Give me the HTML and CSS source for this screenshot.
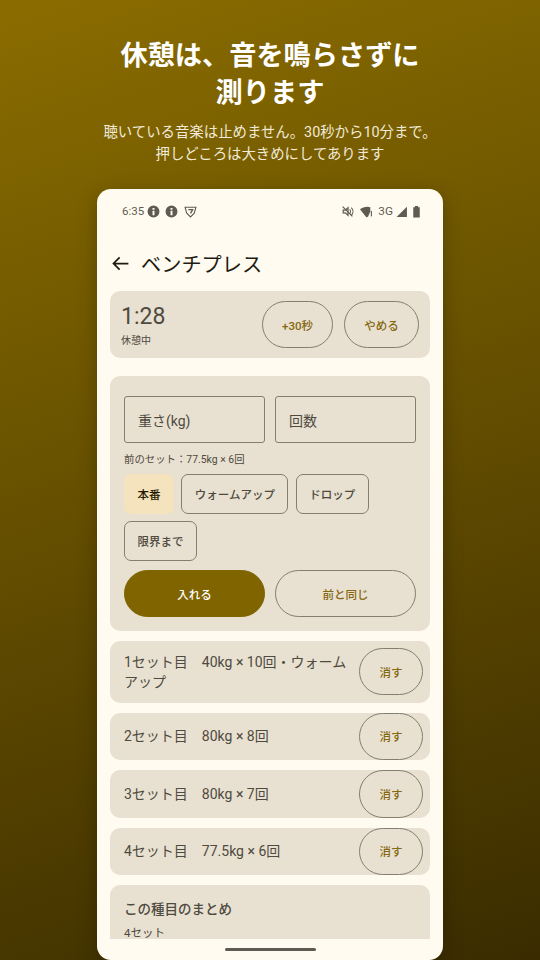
FILE: index.html
```html
<!DOCTYPE html>
<html lang="ja">
<head>
<meta charset="utf-8">
<title>ベンチプレス</title>
<link rel="stylesheet" href="styles.css">
</head>
<body>
<main class="stage">
  <h1 class="headline">休憩は、音を鳴らさずに<br>測ります</h1>
  <p class="lede">聴いている音楽は止めません。30秒から10分まで。<br>押しどころは大きめにしてあります</p>
  <section class="phone">
    <div class="status">
      <div class="status-side">
        <span class="clock">6:35</span>
        <svg class="sicon info-a" viewBox="0 0 24 24"><path fill="#5f5b52" fill-rule="evenodd" d="M12 1a11 11 0 1 0 0 22 11 11 0 0 0 0-22zm-1.8 4.4h3.6v3.4h-3.6zm0 5h3.6v8.4h-3.6z"/></svg>
        <svg class="sicon info-b" viewBox="0 0 24 24"><path fill="#5f5b52" fill-rule="evenodd" d="M12 1a11 11 0 1 0 0 22 11 11 0 0 0 0-22zm-1.8 4.4h3.6v3.4h-3.6zm0 5h3.6v8.4h-3.6z"/></svg>
        <svg class="sicon vpn" viewBox="0 0 24 24"><path fill="none" stroke="#5f5b52" stroke-width="2" d="M2 4h20l-3 11-7 7-7-7z"/><path fill="none" stroke="#5f5b52" stroke-width="2.4" d="M8 8.500h8l-4 7"/></svg>
      </div>
      <div class="status-side">
        <svg class="sicon mute" viewBox="0 0 24 24"><path fill="none" stroke="#5f5b52" stroke-width="2.2" d="M3 3l18 18"/><path fill="none" stroke="#5f5b52" stroke-width="2.2" d="M4 9.500h4l5-4.500v14l-5-4.500H4z"/><path fill="none" stroke="#5f5b52" stroke-width="2" d="M16 8c2 2 2 6 0 8M19 5c4 4 4 10 0 14"/></svg>
        <svg class="sicon wifi" viewBox="0 0 24 24"><path fill="#5f5b52" d="M0 8c5-5 14-6 19-4v8l-4 9-3 2z"/><rect x="20" y="11" width="2" height="10" fill="#5f5b52"/></svg>
        <span class="net">3G</span>
        <svg class="sicon signal" viewBox="0 0 24 24"><path fill="#5f5b52" d="M22 3v19H3z"/></svg>
        <svg class="sicon battery" viewBox="0 0 24 24"><path fill="#5f5b52" d="M9 2h6v2h3v19H6V4h3z"/></svg>
      </div>
    </div>
    <header class="appbar">
      <svg class="back" viewBox="0 0 24 24"><path fill="none" stroke="#1e1b13" stroke-width="2" d="M21 12H4M11 5l-7 7 7 7"/></svg>
      <h2 class="screen-title">ベンチプレス</h2>
    </header>
    <div class="scroller">
      <div class="card timer">
        <div class="timer-text">
          <div class="time">1:28</div>
          <div class="time-label">休憩中</div>
        </div>
        <button class="pill timer-add">+30秒</button>
        <button class="pill timer-stop">やめる</button>
      </div>
      <div class="card form">
        <div class="fields">
          <div class="field">重さ(kg)</div>
          <div class="field">回数</div>
        </div>
        <p class="hint">前のセット：77.5kg × 6回</p>
        <div class="chips">
          <span class="chip selected">本番</span>
          <span class="chip">ウォームアップ</span>
          <span class="chip">ドロップ</span>
          <span class="chip">限界まで</span>
        </div>
        <div class="actions">
          <button class="pill primary">入れる</button>
          <button class="pill">前と同じ</button>
        </div>
      </div>
      <div class="card row row-tall"><span class="row-text">1セット目　40kg × 10回・ウォームアップ</span><button class="pill del">消す</button></div>
      <div class="card row"><span class="row-text">2セット目　80kg × 8回</span><button class="pill del">消す</button></div>
      <div class="card row"><span class="row-text">3セット目　80kg × 7回</span><button class="pill del">消す</button></div>
      <div class="card row"><span class="row-text">4セット目　77.5kg × 6回</span><button class="pill del">消す</button></div>
      <div class="card summary">
        <h3 class="summary-title">この種目のまとめ</h3>
        <p class="summary-line">4セット</p>
      </div>
    </div>
    <div class="navbar"><span class="handle"></span></div>
  </section>
</main>
</body>
</html>
```
FILE: styles.css
```css
* { box-sizing: border-box; }
html, body { margin: 0; height: 100%; }
body {
  width: 540px;
  height: 960px;
  overflow: hidden;
  font-family: Roboto, "Noto Sans CJK JP", sans-serif;
  text-spacing-trim: space-all;
}
.stage {
  height: 960px;
  padding-top: 38px;
  display: flex;
  flex-direction: column;
  align-items: center;
  overflow: hidden;
  background: linear-gradient(162deg, #8a6c00 0%, #6f5700 35%, #3a2c00 100%);
}
.headline {
  margin: 0;
  color: #fff;
  font-size: 27.2px;
  line-height: 37px;
  font-weight: 700;
  text-align: center;
}
.lede {
  margin: 10px 0 0;
  color: #f1ead8;
  font-size: 14.4px;
  line-height: 22px;
  text-align: center;
  white-space: nowrap;
}
.phone {
  margin-top: 23px;
  flex: none;
  width: 346px;
  height: 771px;
  background: #fffbf0;
  border-radius: 14px;
  display: flex;
  flex-direction: column;
  overflow: hidden;
  box-shadow: 0 6px 20px rgba(0, 0, 0, .25);
}
.status {
  height: 44px;
  flex: none;
  padding: 0 20px 0 25px;
  display: flex;
  justify-content: space-between;
  align-items: center;
  color: #5f5b52;
}
.status-side { display: flex; align-items: center; }
.clock { font-size: 11.5px; }
.sicon { width: 13px; height: 13px; display: block; }
.info-a { margin-left: 3px; }
.info-b { margin-left: 5px; }
.vpn { margin-left: 6px; }
.wifi { margin-left: 6px; }
.net { font-size: 11.8px; margin-left: 5px; }
.signal { margin-left: 2px; }
.battery { margin-left: 2px; }
.appbar {
  height: 58px;
  flex: none;
  padding: 2px 0 0 13px;
  display: flex;
  align-items: center;
  gap: 10px;
}
.back { width: 21px; height: 21px; }
.screen-title {
  margin: 0;
  font-size: 20.2px;
  font-weight: 400;
  color: #1e1b13;
}
.scroller {
  flex: 1;
  min-height: 0;
  overflow: hidden;
  padding: 0 13px;
  display: flex;
  flex-direction: column;
  gap: 10px;
}
.card {
  flex: none;
  background: #e8e1d1;
  border-radius: 10px;
  color: #4f4a40;
}
.pill {
  border: 1px solid #837e70;
  border-radius: 24px;
  background: transparent;
  color: #85680f;
  font: 500 11.5px Roboto, "Noto Sans CJK JP", sans-serif;
  height: 47px;
  padding: 0;
}
.timer {
  height: 67px;
  margin-bottom: 8px;
  padding: 10px 11px 0;
  display: flex;
  align-items: flex-start;
  gap: 11px;
}
.timer-text { flex: 1; }
.time { font-size: 23px; line-height: 28px; margin-top: 2px; }
.time-label { font-size: 10px; line-height: 14px; margin-top: 3px; }
.timer-add { width: 71px; }
.timer-stop { width: 75px; }
.form { height: 254.5px; padding: 20px 14px 0; }
.fields, .actions { display: flex; gap: 10px; }
.field {
  flex: 1;
  height: 47px;
  border: 1px solid #837e70;
  border-radius: 3px;
  padding: 0 13px;
  display: flex;
  align-items: center;
  font-size: 14px;
}
.hint { margin: 10px 0 7px; font-size: 10.4px; line-height: 14px; }
.chips { display: flex; flex-wrap: wrap; gap: 7px 7.25px; }
.chip {
  height: 40px;
  padding: 0 12.5px;
  border: 1px solid #837e70;
  border-radius: 7px;
  display: flex;
  align-items: center;
  font-size: 11.5px;
  font-weight: 500;
}
.chip.selected { background: #f4e3bd; border-color: transparent; color: #261a00; }
.actions { margin-top: 9px; }
.actions .pill { flex: 1; }
.pill.primary { background: #806400; border-color: #806400; color: #fff; }
.row {
  min-height: 47.5px;
  padding: 0 7px 0 14px;
  display: flex;
  align-items: center;
  gap: 8px;
  font-size: 14px;
  line-height: 20px;
}
.row-tall { height: 62px; }
.row-text { flex: 1; }
.del { flex: none; width: 64px; height: 47.5px; }
.summary { height: 100px; padding: 13px 14px 0; }
.summary-title { margin: 0; font-size: 13.5px; line-height: 22px; font-weight: 500; }
.summary-line { margin: 5px 0 0; font-size: 11.5px; line-height: 16px; }
.navbar {
  height: 21px;
  flex: none;
  display: flex;
  justify-content: center;
  padding-top: 9px;
}
.handle { width: 91px; height: 3px; border-radius: 2px; background: #5f5b52; }
```
